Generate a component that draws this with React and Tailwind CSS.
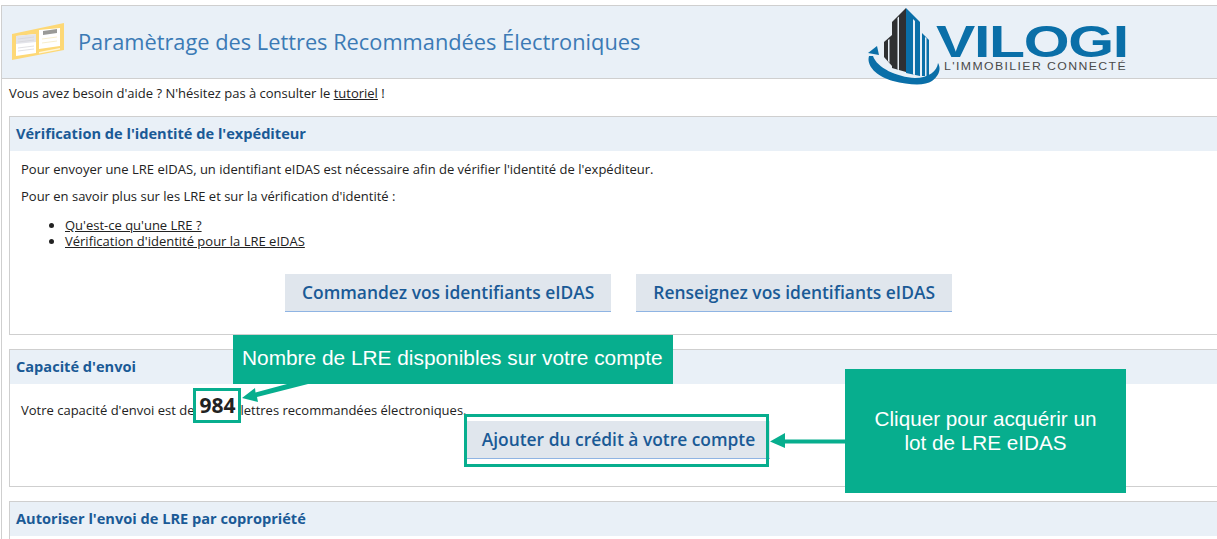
const font = { fontFamily: '"Open Sans", sans-serif' };

function FolderIcon() {
  return (
    <svg width="53" height="38" viewBox="0 0 53 38" className="shrink-0">
      <polygon points="0,11 52,0 52,27 0,37" fill="#fdd876" />
      <polygon points="4,13 24,11 24,30 4,33" fill="#ffffff" />
      <polygon points="4,13 24,11 24,19 4,21" fill="#e3e4ea" />
      <polygon points="27,7 48,5 48,23 27,26" fill="#ffffff" />
      <polygon points="31,8 45,6 45,10 31,12" fill="#9a9a98" />
      <polygon points="27,29 48,25 48,26.5 27,30.5" fill="#fff6d8" />
      <path d="M6 25 L22 23 M6 28 L22 26 M6 16 L22 14 M6 19 L22 17" stroke="#d4d4d8" strokeWidth="0.7" />
      <path d="M30 16 L45 14 M30 20 L45 18" stroke="#f4e6b8" strokeWidth="0.7" />
    </svg>
  );
}

function Logo() {
  return (
    <div className="relative w-[260px] h-[80px] shrink-0 mr-[90px] mt-[8px]">
      <svg width="80" height="80" viewBox="0 0 80 80" className="absolute left-0 top-0">
        <polygon points="17,36 25,29 25,60 17,51" fill="#2f3032" />
        <polygon points="21,34 22.5,33 22.5,57 21,55" fill="#e9f0f7" />
        <polygon points="25,16 39,2 39,66 25,62" fill="#2f3032" />
        <polygon points="30.5,12 32,10.5 32,64 30.5,63.5" fill="#e9f0f7" />
        <polygon points="39,2 53,16 53,70 39,67" fill="#0a6fa8" />
        <polygon points="46,13 48,15 48,69 46,68.5" fill="#e9f0f7" />
        <polygon points="55,27 62,34 62,70 55,70" fill="#0a6fa8" />
        <polygon points="58,31 59.5,32 59.5,70 58,70" fill="#e9f0f7" />
        <path d="M2 50 C-1 60 10 71 26 75 C42 79 58 80 65 75 C73 69 74 62 71 57 C70 65 62 72 48 72 C30 71 10 62 6 50 Z" fill="#0a6fa8" />
        <polygon points="10,40 1,47 12,49" fill="#0a6fa8" />
      </svg>
      <span className="absolute left-[69px] top-[18px] origin-left scale-x-[1.31] text-[#0a6fa8] font-bold text-[45px] leading-[36px] tracking-[-1px]" style={{ fontFamily: '"Liberation Sans", sans-serif' }}>
        VILOGI
      </span>
      <span className="absolute left-[77px] top-[55px] origin-left scale-x-[1.225] text-[#4a4a4a] text-[10px] leading-[12px] tracking-[1.15px] whitespace-nowrap" style={{ fontFamily: '"Liberation Sans", sans-serif' }}>
        L'IMMOBILIER CONNECTÉ
      </span>
    </div>
  );
}

function Card({ title, children, className }) {
  return (
    <section className={`border border-[#cfcfcf] mr-[-10px] ${className}`}>
      <h2 className="h-[34px] bg-[#e9f0f7] pl-[6px] text-[14.6px] font-bold leading-[33px] text-[#1a5a96]">
        {title}
      </h2>
      {children}
    </section>
  );
}

function ActionButton({ children, className = "px-[17px]" }) {
  return (
    <button className={`h-[38px] bg-[#e0e6ed] border-b border-[#8fb4e3] text-[17.4px] font-semibold text-[#1a5a96] whitespace-nowrap ${className}`}>
      {children}
    </button>
  );
}

export default function App() {
  return (
    <div className="relative w-[1217px] h-[539px] overflow-hidden bg-white pt-[5px] pl-[1px] text-[13px] text-[#222]" style={font}>
      <div className="border-l border-t border-[#cfcfcf] h-full">
        <header className="h-[73px] flex items-center bg-[#e9f0f7] border-b border-[#cfcfcf] pl-[10px]">
          <FolderIcon />
          <h1 className="ml-[13px] text-[21.8px] font-normal text-[#3b7ab5] whitespace-nowrap">
            Paramètrage des Lettres Recommandées Électroniques
          </h1>
          <div className="ml-auto"><Logo /></div>
        </header>

        <p className="pl-[7px] pt-[5px] leading-[18px]">
          Vous avez besoin d'aide ? N'hésitez pas à consulter le <a className="underline">tutoriel</a> !
        </p>

        <div className="pl-[7px] pt-[14px] flex flex-col gap-[14px]">
          <Card title="Vérification de l'identité de l'expéditeur" className="h-[219px]">
            <div className="pl-[11px] pr-[10px] pt-[9px]">
              <p className="leading-[18px]">Pour envoyer une LRE eIDAS, un identifiant eIDAS est nécessaire afin de vérifier l'identité de l'expéditeur.</p>
              <p className="leading-[18px] mt-[9px]">Pour en savoir plus sur les LRE et sur la vérification d'identité :</p>
              <ul className="list-disc pl-[44px] mt-[12px] leading-[16px]">
                <li><a className="underline">Qu'est-ce qu'une LRE ?</a></li>
                <li><a className="underline">Vérification d'identité pour la LRE eIDAS</a></li>
              </ul>
              <div className="flex justify-center gap-[25px] mt-[25px]">
                <ActionButton>Commandez vos identifiants eIDAS</ActionButton>
                <ActionButton>Renseignez vos identifiants eIDAS</ActionButton>
              </div>
            </div>
          </Card>

          <Card title="Capacité d'envoi" className="h-[138px]">
            <div className="pl-[11px] pr-[10px] pt-[17px]">
              <p className="leading-[18px] whitespace-nowrap">
                Votre capacité d'envoi est de
                <span className="inline-block align-middle -my-[10px] -ml-[1px] -mr-[1px] relative -top-[6px] w-[48px] h-[35px] bg-white border-[3px] border-[#07ae8e] text-center text-[21px] font-bold leading-[29px] text-[#222]">984</span>
                lettres recommandées électroniques.
              </p>
              <div className="flex justify-center mt-[2px]">
                <ActionButton className="px-[15px]">Ajouter du crédit à votre compte</ActionButton>
              </div>
            </div>
          </Card>

          <Card title="Autoriser l'envoi de LRE par copropriété" className="h-[60px]" />
        </div>
      </div>

      {/* annotations */}
      <div className="absolute left-[233px] top-[335px] w-[440px] h-[49px] bg-[#07ae8e] text-white text-[20.85px] leading-[46px] pl-[9px] whitespace-nowrap" style={{ fontFamily: '"Liberation Sans", sans-serif' }}>
        Nombre de LRE disponibles sur votre compte
      </div>
      <div className="absolute left-[464px] top-[414px] w-[305px] h-[53px] border-[3px] border-[#07ae8e]" />
      <div className="absolute left-[845px] top-[369px] w-[281px] h-[124px] flex items-center justify-center bg-[#07ae8e] text-white text-[20.7px] leading-[24px] text-center px-[20px]" style={{ fontFamily: '"Liberation Sans", sans-serif' }}>
        Cliquer pour acquérir un lot de LRE eIDAS
      </div>
      <svg width="70" height="30" viewBox="0 0 70 30" className="absolute left-[240px] top-[382px]">
        <polygon points="2,16 15,6 15.5,10.5 47,2 68,2 17,15 18,20" fill="#07ae8e" />
      </svg>
      <svg width="80" height="20" viewBox="0 0 80 20" className="absolute left-[768px] top-[431px]">
        <polygon points="2,10.5 17,2 17,8.5 77,8.5 77,12.5 17,12.5 17,17" fill="#07ae8e" />
      </svg>
    </div>
  );
}
